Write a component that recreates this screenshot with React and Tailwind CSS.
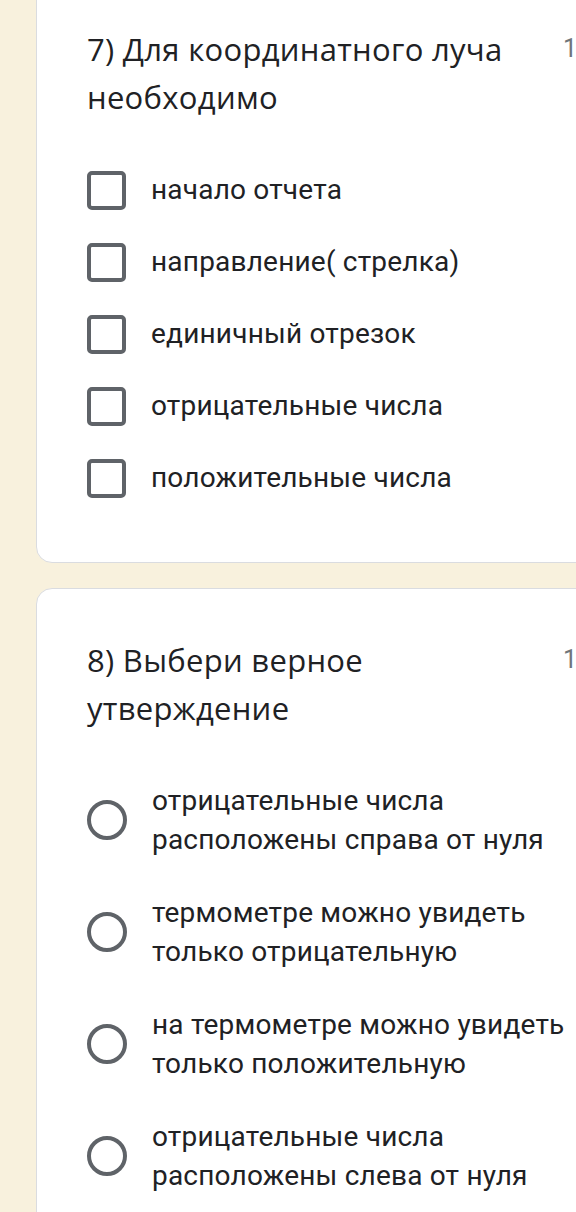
const checks = [
  "начало отчета",
  "направление( стрелка)",
  "единичный отрезок",
  "отрицательные числа",
  "положительные числа",
];

const radios = [
  ["отрицательные числа", "расположены справа от нуля"],
  ["термометре можно увидеть", "только отрицательную"],
  ["на термометре можно увидеть", "только положительную"],
  ["отрицательные числа", "расположены слева от нуля"],
];

const Title = ({ lines }) => (
  <div className="flex items-start">
    <div className="w-[476px] shrink-0 text-[31px] leading-[48px] tracking-[0.3px] text-[#202124] [font-family:'Open_Sans',sans-serif]">
      {lines.map((l) => (
        <div key={l}>{l}</div>
      ))}
    </div>
    <div className="shrink-0 whitespace-nowrap text-[25px] leading-[48px] text-[#70757a] [font-family:Roboto,sans-serif]">
      1 балл
    </div>
  </div>
);

export default function App() {
  return (
    <div className="h-[1212px] overflow-hidden bg-[#f8f1dd] pl-[36px]">
      <div className="-mt-[20px] mr-[-40px] rounded-2xl border border-[#dadce0] bg-white pb-[48px] pl-[50px] pt-[44px]">
        <Title lines={["7) Для координатного луча", "необходимо"]} />
        <div className="mt-[33px]">
          {checks.map((c) => (
            <div key={c} className="flex h-[72px] items-center">
              <div className="h-[39px] w-[39px] shrink-0 rounded-[5px] border-4 border-[#5f6368]" />
              <span className="ml-[25px] text-[28px] tracking-[0.2px] text-[#202124] [font-family:Roboto,sans-serif]">{c}</span>
            </div>
          ))}
        </div>
      </div>
      <div className="mr-[-40px] mt-[25px] rounded-2xl border border-[#dadce0] bg-white pb-[48px] pl-[50px] pt-[47px]">
        <Title lines={["8) Выбери верное", "утверждение"]} />
        <div className="mt-[32px]">
          {radios.map((r) => (
            <div key={r.join()} className="flex h-[112px] items-center">
              <div className="h-[40px] w-[40px] shrink-0 rounded-full border-4 border-[#5f6368]" />
              <div className="ml-[25px] whitespace-nowrap text-[28px] leading-[39px] tracking-[0.2px] text-[#202124] [font-family:Roboto,sans-serif]">
                {r.map((l) => (
                  <div key={l}>{l}</div>
                ))}
              </div>
            </div>
          ))}
        </div>
      </div>
    </div>
  );
}
